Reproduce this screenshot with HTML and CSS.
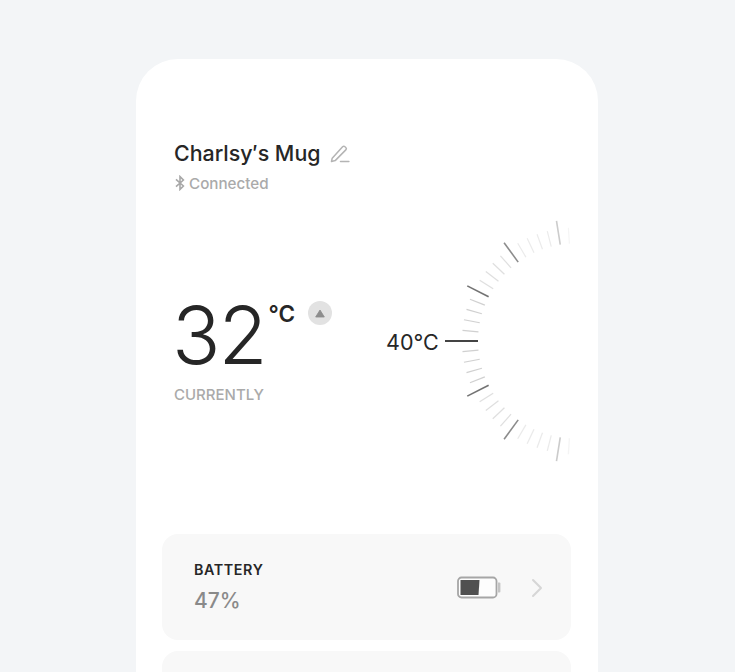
FILE: index.html
```html
<!DOCTYPE html>
<html lang="en">
<head>
<meta charset="utf-8">
<title>Charlsy's Mug</title>
<link rel="stylesheet" href="styles.css">
</head>
<body>
<main class="card">
  <header class="head">
    <div class="title-row">
      <h1 class="title">Charlsy′s Mug</h1>
      <svg class="edit" viewBox="0 0 20 20" width="20" height="20" fill="none" stroke="#b4b4b4" stroke-width="1.5" stroke-linejoin="round" stroke-linecap="round"><path d="M2.2 14.2 12.6 2.8a1.7 1.7 0 0 1 2.4 0l.8.7a1.7 1.7 0 0 1 0 2.4L5.2 16.6l-3.7.9z"/><path d="M10.5 17.6h8.4"/></svg>
    </div>
    <div class="status">
      <svg class="bt" viewBox="0 0 10 16" width="10" height="16" fill="none" stroke="#a8a8a8" stroke-width="1.6"><path d="M1 4.4 8.4 11 5 14.4V1.6L8.4 5 1 11.6"/></svg>
      <span>Connected</span>
    </div>
  </header>
  <section class="hero">
    <div class="current">
      <div class="reading">
        <span class="value">32</span>
        <span class="unit">°C</span>
        <span class="trend"><svg viewBox="0 0 12 10" width="10" height="9"><path d="M6 .8 11.2 9.2H.8z" fill="#8d8d8d" stroke="#8d8d8d" stroke-linejoin="round"/></svg></span>
      </div>
      <div class="caption">CURRENTLY</div>
    </div>
    <div class="target">40°C</div>
    <svg class="gauge" viewBox="445 210 125 262" width="125" height="262" fill="none">
      <line class="now" x1="445" y1="341" x2="478" y2="341"/>
      <g class="minor f1">
        <line x1="462" y1="341" x2="478" y2="341" transform="rotate(5.4 575.5 341)"/>
        <line x1="462" y1="341" x2="478" y2="341" transform="rotate(-5.4 575.5 341)"/>
        <line x1="462" y1="341" x2="478" y2="341" transform="rotate(10.8 575.5 341)"/>
        <line x1="462" y1="341" x2="478" y2="341" transform="rotate(-10.8 575.5 341)"/>
        <line x1="462" y1="341" x2="478" y2="341" transform="rotate(16.2 575.5 341)"/>
        <line x1="462" y1="341" x2="478" y2="341" transform="rotate(-16.2 575.5 341)"/>
        <line x1="462" y1="341" x2="478" y2="341" transform="rotate(21.6 575.5 341)"/>
        <line x1="462" y1="341" x2="478" y2="341" transform="rotate(-21.6 575.5 341)"/>
      </g>
      <g class="minor f2">
        <line x1="462" y1="341" x2="478" y2="341" transform="rotate(32.4 575.5 341)"/>
        <line x1="462" y1="341" x2="478" y2="341" transform="rotate(-32.4 575.5 341)"/>
        <line x1="462" y1="341" x2="478" y2="341" transform="rotate(37.8 575.5 341)"/>
        <line x1="462" y1="341" x2="478" y2="341" transform="rotate(-37.8 575.5 341)"/>
        <line x1="462" y1="341" x2="478" y2="341" transform="rotate(43.2 575.5 341)"/>
        <line x1="462" y1="341" x2="478" y2="341" transform="rotate(-43.2 575.5 341)"/>
        <line x1="462" y1="341" x2="478" y2="341" transform="rotate(48.6 575.5 341)"/>
        <line x1="462" y1="341" x2="478" y2="341" transform="rotate(-48.6 575.5 341)"/>
      </g>
      <g class="minor f3">
        <line x1="462" y1="341" x2="478" y2="341" transform="rotate(59.4 575.5 341)"/>
        <line x1="462" y1="341" x2="478" y2="341" transform="rotate(-59.4 575.5 341)"/>
        <line x1="462" y1="341" x2="478" y2="341" transform="rotate(64.8 575.5 341)"/>
        <line x1="462" y1="341" x2="478" y2="341" transform="rotate(-64.8 575.5 341)"/>
        <line x1="462" y1="341" x2="478" y2="341" transform="rotate(70.2 575.5 341)"/>
        <line x1="462" y1="341" x2="478" y2="341" transform="rotate(-70.2 575.5 341)"/>
        <line x1="462" y1="341" x2="478" y2="341" transform="rotate(75.6 575.5 341)"/>
        <line x1="462" y1="341" x2="478" y2="341" transform="rotate(-75.6 575.5 341)"/>
      </g>
      <g class="minor f4">
        <line x1="462" y1="341" x2="478" y2="341" transform="rotate(86.4 575.5 341)"/>
        <line x1="462" y1="341" x2="478" y2="341" transform="rotate(-86.4 575.5 341)"/>
      </g>
      <g class="major m1">
        <line x1="454" y1="341" x2="478" y2="341" transform="rotate(27 575.5 341)"/>
        <line x1="454" y1="341" x2="478" y2="341" transform="rotate(-27 575.5 341)"/>
      </g>
      <g class="major m2">
        <line x1="454" y1="341" x2="478" y2="341" transform="rotate(54 575.5 341)"/>
        <line x1="454" y1="341" x2="478" y2="341" transform="rotate(-54 575.5 341)"/>
      </g>
      <g class="major m3">
        <line x1="454" y1="341" x2="478" y2="341" transform="rotate(81 575.5 341)"/>
        <line x1="454" y1="341" x2="478" y2="341" transform="rotate(-81 575.5 341)"/>
      </g>
    </svg>
  </section>
  <section class="panel">
    <div class="panel-text">
      <div class="panel-label">BATTERY</div>
      <div class="panel-value">47%</div>
    </div>
    <svg class="battery" viewBox="0 0 44 24" width="44" height="24" fill="none">
      <rect x="1" y="1.5" width="38.5" height="20" rx="3.5" stroke="#a6a6a6" stroke-width="1.8" fill="#fdfdfd"/>
      <path d="M3.5 4h19l-1 15H3.5z" fill="#505050"/>
      <path d="M41 6.5h1.4a1 1 0 0 1 1 1v8a1 1 0 0 1-1 1H41z" fill="#c4c4c4"/>
    </svg>
    <svg class="chev" viewBox="0 0 12 20" width="12" height="20" fill="none" stroke="#d6d6d6" stroke-width="2" stroke-linecap="round" stroke-linejoin="round"><path d="M2 2l8 8-8 8"/></svg>
  </section>
  <section class="panel"></section>
</main>
</body>
</html>
```

FILE: styles.css
```css
* { box-sizing: border-box; }
html, body { margin: 0; height: 672px; overflow: hidden; }
body {
  background: #f3f5f7;
  padding-top: 59px;
  font-family: Inter, "Liberation Sans", sans-serif;
  color: #262626;
}
.card {
  width: 462px;
  height: 613px;
  margin-left: 136px;
  background: #fff;
  border-radius: 42px 42px 0 0;
  padding: 80px 27px 0 26px;
  overflow: hidden;
}
.head { padding-left: 12px; }
.title-row { display: flex; align-items: center; gap: 9px; height: 29px; }
.title { margin: 0; font-size: 21.4px; font-weight: 550; line-height: 29px; }
.edit { display: block; }
.status {
  display: flex;
  align-items: center;
  gap: 4px;
  margin-top: 5px;
  height: 20px;
  font-size: 15.2px;
  font-weight: 500;
  color: #aaa;
}
.bt { margin-left: 1px; }
.hero { display: flex; align-items: flex-start; height: 262px; margin: 17px 0 62px; }
.current { width: 224px; padding: 80px 0 0 12px; }
.reading { display: flex; align-items: flex-start; height: 90px; }
.value { font-size: 80px; font-weight: 300; line-height: 90px; letter-spacing: -2px; margin-left: -2px; }
.unit { font-size: 22.5px; font-weight: 600; line-height: 26px; margin: 11px 0 0 3px; }
.trend {
  display: flex;
  align-items: center;
  justify-content: center;
  width: 24px;
  height: 24px;
  margin: 11px 0 0 13px;
  border-radius: 50%;
  background: #e2e2e2;
}
.caption { margin-top: 5px; font-size: 15px; font-weight: 500; color: #aaa; }
.target { width: 59px; margin-top: 119px; font-size: 21.5px; line-height: 26px; white-space: nowrap; }
.gauge { display: block; flex: none; }
.now { stroke: #444; stroke-width: 1.8; }
.minor { stroke-width: 1.2; stroke: #000; }
.major { stroke-width: 1.6; stroke: #000; }
.f1 { opacity: .18; }
.f2 { opacity: .12; }
.f3 { opacity: .08; }
.f4 { opacity: .04; }
.m1 { opacity: .55; }
.m2 { opacity: .45; }
.m3 { opacity: .2; }
.panel {
  display: flex;
  align-items: center;
  height: 106px;
  margin-bottom: 11px;
  padding: 0 28px 0 32px;
  background: #f8f8f8;
  border-radius: 16px;
}
.panel-text { flex: 1; }
.panel-label { font-size: 14.3px; font-weight: 600; letter-spacing: .6px; line-height: 20px; margin-top: -1px; }
.panel-value { margin-top: 8px; font-size: 21px; font-weight: 500; line-height: 26px; color: #8a8a8a; }
.battery { display: block; margin-right: 30px; margin-top: 1px; }
.chev { display: block; margin-top: 1px; }
```
